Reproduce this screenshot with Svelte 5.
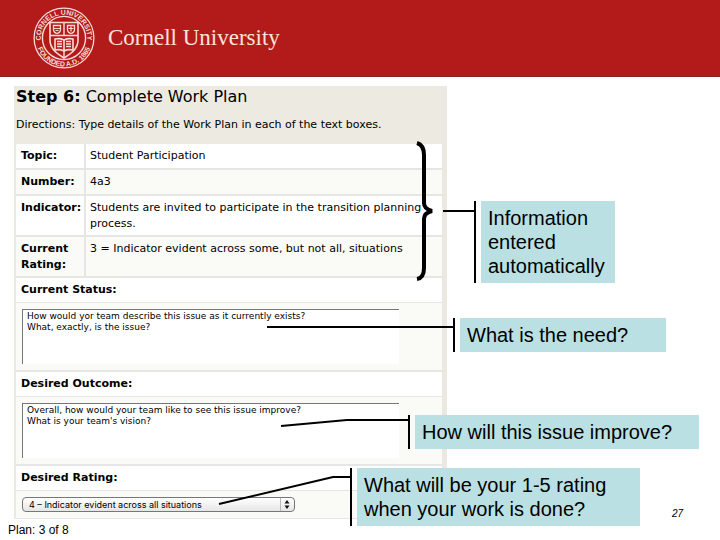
<script lang="ts">
	type Row = { label: string; value: string; tall?: boolean };

	const rows: Row[] = [
		{ label: "Topic:", value: "Student Participation" },
		{ label: "Number:", value: "4a3" },
		{
			label: "Indicator:",
			value: "Students are invited to participate in the transition planning process.",
			tall: true,
		},
		{
			label: "Current Rating:",
			value: "3 = Indicator evident across some, but not all, situations",
			tall: true,
		},
	];

	const ratings = ["4 – Indicator evident across all situations"];

	let status = $state(
		"How would yor team describe this issue as it currently exists?\nWhat, exactly, is the issue?"
	);
	let outcome = $state(
		"Overall, how would your team like to see this issue improve?\nWhat is your team's vision?"
	);
	let rating = $state(ratings[0]);
</script>

<header>
	<svg class="seal" viewBox="0 0 62 62" role="img" aria-label="Cornell seal">
		<defs>
			<path id="arc-top" d="M8.6 37A23.2 23.2 0 1 1 53.4 37" />
			<path id="arc-bottom" d="M2.6 31A28.4 28.4 0 0 0 59.4 31" />
		</defs>
		<g fill="none" stroke="#f8dcd3">
			<circle cx="31" cy="31" r="29.9" stroke-width="1.3" />
			<circle cx="31" cy="31" r="21.6" stroke-width="1.4" />
			<path d="M17 15.5H45V33C45 42 38 46.5 31 51C24 46.5 17 42 17 33Z" stroke-width="1.6" />
			<path d="M17 28.5H45M31 15.5V28.5M31 44V51" stroke-width="1.4" />
			<path d="M20.5 18.5h7v4q0 3-3.5 4q-3.5-1-3.5-4zM34.5 18.5h7v4q0 3-3.5 4q-3.5-1-3.5-4z" stroke-width="1.3" />
			<path d="M20.5 21.5h7M22.5 23.5h3M38 19.5v5M35.5 21.5h5" stroke-width="1.2" />
			<path d="M31 33q-4-2-9-1v11q5-1 9 1q4-2 9-1v-11q-5-1-9 1zv11" stroke-width="1.6" />
			<path d="M24 34.5h5M24 37h5M24 39.5h5M33 34.5h5M33 37h5M33 39.5h5" stroke-width="1.3" />
		</g>
		<g fill="#f8dcd3">
			<text><textPath href="#arc-top" startOffset="50%">CORNELL UNIVERSITY</textPath></text>
			<text><textPath href="#arc-bottom" startOffset="50%">FOUNDED A.D. 1865</textPath></text>
		</g>
	</svg>
	<span class="wordmark">Cornell University</span>
</header>

<main>
	<form class="sheet">
		<div class="intro">
			<h1><b>Step 6:</b> Complete Work Plan</h1>
			<p>Directions: Type details of the Work Plan in each of the text boxes.</p>
		</div>

		<table>
			<tbody>
				{#each rows as row}
					<tr class:tall={row.tall}>
						<th scope="row">{row.label}</th>
						<td>{row.value}</td>
					</tr>
				{/each}
			</tbody>
		</table>

		<label for="status">Current Status:</label>
		<div class="field">
			<textarea id="status" bind:value={status}></textarea>
		</div>

		<label for="outcome">Desired Outcome:</label>
		<div class="field">
			<textarea id="outcome" bind:value={outcome}></textarea>
		</div>

		<label for="rating">Desired Rating:</label>
		<div class="field last">
			<div class="picker">
				<select id="rating" bind:value={rating}>
					{#each ratings as r}
						<option>{r}</option>
					{/each}
				</select>
				<svg viewBox="0 0 14 13" aria-hidden="true">
					<path d="M0.5 0V13" stroke="#bbb" />
					<path d="M4.5 5.5L7 2L9.5 5.5ZM4.5 7.5L7 11L9.5 7.5Z" fill="#111" />
				</svg>
			</div>
		</div>
	</form>

	<!-- brace and leader lines -->
	<svg class="leaders" viewBox="0 0 720 540" aria-hidden="true">
		<path class="brace" d="M417 143Q424 145 424 155V203Q424 209 432 211Q424 213 424 219V268Q424 278 417 279" />
		<path d="M443 211H474" />
		<path d="M267 327H454" />
		<path d="M281 426L347 420H409" />
		<path d="M219 504L333 477H351" />
	</svg>

	<aside class="note auto">Information entered automatically</aside>
	<aside class="note need">What is the need?</aside>
	<aside class="note improve">How will this issue improve?</aside>
	<aside class="note done">What will be your 1-5 rating when your work is done?</aside>
	<span class="page">27</span>
</main>

<footer>Plan: 3 of 8</footer>

<style>
	:global(body) {
		background: #fff;
		color: #000;
		font-family: "Liberation Sans", Arial, sans-serif;
	}

	:global(#app) {
		position: relative;
	}

	header {
		display: flex;
		align-items: center;
		gap: 13px;
		height: 76px;
		padding-left: 33px;
		background: #b31b1b;
		border-bottom: 1px solid #8c2529;
	}

	.seal {
		width: 62px;
		height: 62px;
	}

	.seal text {
		font: bold 7px "Liberation Sans", Arial, sans-serif;
		text-anchor: middle;
	}

	.wordmark {
		color: #fbe3dc;
		font: 23px "Liberation Serif", "Times New Roman", serif;
	}

	.sheet {
		margin: 9px 273px 0 14px;
		border-left: 2px solid #e9e8e4;
		border-right: 5px solid #ebe8e2;
		font-family: "DejaVu Sans", Verdana, sans-serif;
	}

	.intro {
		height: 58px;
		background: #edeae2;
	}

	h1 {
		margin: 0;
		font-size: 16px;
		line-height: 22px;
		font-weight: normal;
	}

	.intro p {
		margin: 9px 0 0;
		font-size: 11px;
		line-height: 16px;
	}

	table {
		width: 100%;
		border-collapse: separate;
		border-spacing: 0;
		table-layout: fixed;
	}

	th,
	td {
		height: 26px;
		padding: 4px 4px 0;
		box-sizing: border-box;
		border-bottom: 2px solid #e6e6e4;
		text-align: left;
		vertical-align: top;
		font-size: 11px;
		line-height: 16px;
	}

	tr.tall th,
	tr.tall td {
		height: 41px;
	}

	th {
		width: 70px;
		padding: 4px 0 0 5px;
		border-right: 2px solid #e6e6e4;
	}

	tr:nth-child(even),
	.field {
		background: #fafaf7;
	}

	label {
		display: block;
		height: 24px;
		padding-left: 5px;
		border-bottom: 1px solid #e6e6e4;
		font-size: 11px;
		line-height: 24px;
		font-weight: bold;
	}

	.field {
		padding: 6px;
		border-bottom: 2px solid #e6e6e4;
	}

	.last {
		border-bottom-width: 1px;
	}

	textarea,
	select {
		display: block;
		box-sizing: border-box;
		margin: 0;
		border-radius: 0;
		color: #000;
	}

	textarea {
		width: 91%;
		height: 55px;
		padding: 1px 4px;
		border: 0 solid #777;
		border-width: 1px 0 0 1px;
		background: #fff;
		font: 9px "DejaVu Sans", Verdana, sans-serif;
		line-height: 11px;
		resize: none;
		overflow: hidden;
	}

	.picker {
		position: relative;
		width: 66%;
	}

	.picker svg {
		position: absolute;
		top: 1px;
		right: 1px;
		width: 14px;
		height: 13px;
		pointer-events: none;
	}

	select {
		width: 100%;
		height: 15px;
		padding: 0 6px;
		border: 1px solid #777;
		border-radius: 4px;
		background: linear-gradient(#fff, #e6e6e6);
		font: 9px Inter, sans-serif;
		appearance: none;
	}

	.leaders {
		position: absolute;
		top: 0;
		right: 0;
		width: 720px;
		height: 540px;
		pointer-events: none;
	}

	.leaders path {
		fill: none;
		stroke: #000;
		stroke-width: 2;
	}

	.leaders .brace {
		stroke-width: 4;
	}

	.note {
		position: absolute;
		box-sizing: border-box;
		padding: 5px 7px;
		background: #bbe0e3;
		font-size: 20px;
		line-height: 24px;
	}

	.note::before {
		content: "";
		position: absolute;
		top: 0;
		bottom: 0;
		left: -7px;
		width: 2px;
		background: #000;
	}

	.auto {
		top: 201px;
		right: 105px;
		width: 134px;
	}

	.need {
		top: 318px;
		right: 54px;
		width: 206px;
	}

	.improve {
		top: 415px;
		right: 21px;
		width: 284px;
	}

	.done {
		top: 468px;
		right: 80px;
		width: 283px;
	}

	.page {
		position: absolute;
		top: 508px;
		right: 37px;
		font-size: 10px;
		line-height: 12px;
		font-style: italic;
	}

	footer {
		padding: 4px 8px 0;
		font-size: 12px;
		line-height: 14px;
	}
</style>
